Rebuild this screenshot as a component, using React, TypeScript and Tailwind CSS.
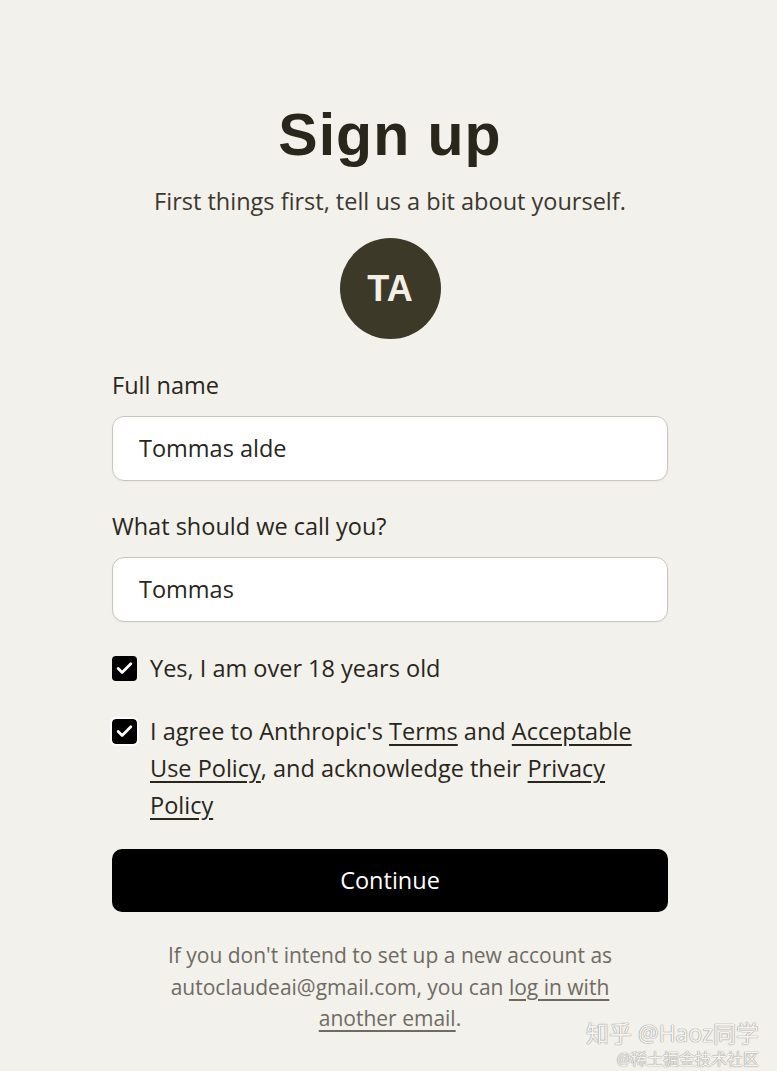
import { Check } from "lucide-react";

const body = "font-['Open_Sans','Noto_Sans_CJK_SC',sans-serif]";

const Box = ({ ring = false }: { ring?: boolean }) => (
  <span
    className={
      "flex h-[25px] w-[25px] shrink-0 items-center justify-center rounded-[4px] bg-black " +
      (ring ? "outline-2 outline-white" : "")
    }
  >
    <Check className="h-[19px] w-[19px] text-white" strokeWidth={3.5} />
  </span>
);

const Field = ({ label, value }: { label: string; value: string }) => (
  <div className="flex flex-col">
    <label className="mt-[31px] text-[23.5px] leading-[30px] text-[#29261b]">{label}</label>
    <div className="mt-[16px] flex h-[65px] items-center rounded-[12px] border border-[#c9c5bd] bg-white px-[26px] text-[23.5px] text-[#29261b] shadow-[0_1px_2px_rgba(0,0,0,0.04)]">
      {value}
    </div>
  </div>
);

export default function App() {
  return (
    <div className={"relative min-h-screen bg-[#f3f1ec] " + body}>
      <div className="ml-[112px] flex w-[556px] flex-col pt-[103px] pb-[40px]">
        <h1 className="text-center font-['Liberation_Sans',Arial,sans-serif] text-[59px] font-bold leading-[64px] tracking-[1px] text-[#29261b]">
          Sign up
        </h1>
        <p className="mt-[19px] text-center text-[23.5px] leading-[30px] text-[#3b382f]">
          First things first, tell us a bit about yourself.
        </p>
        <div className="mx-auto mt-[22px] flex h-[101px] w-[101px] items-center justify-center rounded-full bg-[#3d3929]">
          <span className="font-['Liberation_Sans',Arial,sans-serif] text-[36px] font-bold text-[#f3efe6]">TA</span>
        </div>

        <Field label="Full name" value="Tommas alde" />
        <div className="-mt-[1px]">
          <Field label="What should we call you?" value="Tommas" />
        </div>

        <div className="mt-[31px] flex items-center gap-[13px] text-[23.5px] leading-[30px] text-[#29261b]">
          <Box />
          <span>Yes, I am over 18 years old</span>
        </div>

        <div className="mt-[30px] flex items-start gap-[13px] text-[23.5px] leading-[37px] text-[#29261b]">
          <span className="mt-[6px]">
            <Box ring />
          </span>
          <span>
            I agree to Anthropic's <a className="underline underline-offset-[4px]">Terms</a> and{" "}
            <a className="underline underline-offset-[4px]">Acceptable</a>
            <br />
            <a className="underline underline-offset-[4px]">Use Policy</a>, and acknowledge their{" "}
            <a className="underline underline-offset-[4px]">Privacy</a>
            <br />
            <a className="underline underline-offset-[4px]">Policy</a>
          </span>
        </div>

        <button className="mt-[25px] flex h-[63px] w-full items-center justify-center rounded-[10px] bg-black text-[23.5px] text-white">
          Continue
        </button>

        <p className="mt-[28px] text-center text-[21px] leading-[31.5px] text-[#6f6b62]">
          If you don't intend to set up a new account as
          <br />
          autoclaudeai@gmail.com, you can{" "}
          <a className="underline underline-offset-[4px]">
            log in with
            <br />
            another email
          </a>
          .
        </p>
      </div>

      <div className="pointer-events-none absolute right-[18px] top-[1022px] flex flex-col items-end leading-none">
        <span className="text-[23px] text-white/90 [text-shadow:0_0_1px_#8a877f,0_0_1px_#8a877f]">知乎 @Haoz同学</span>
        <span className="mt-[6px] text-[16px] text-white/90 [text-shadow:0_0_1px_#8a877f,0_0_1px_#8a877f]">@稀土掘金技术社区</span>
      </div>
    </div>
  );
}
